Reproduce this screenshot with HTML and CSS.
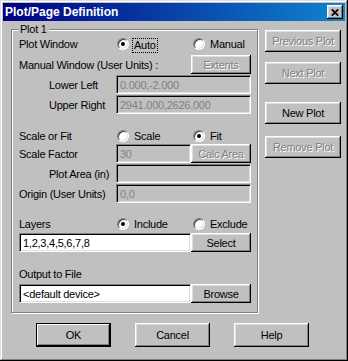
FILE: index.html
```html
<!DOCTYPE html>
<html>
<head>
<meta charset="utf-8">
<link rel="stylesheet" href="styles.css">
</head>
<body>
<div class="window">
  <div class="titlebar">
    <span class="title">Plot/Page Definition</span>
    <button class="close" type="button"><svg width="8" height="7" viewBox="0 0 8 7"><path d="M0.8 0.3 L7.2 6.7 M7.2 0.3 L0.8 6.7" stroke="#000" stroke-width="1.7" fill="none"/></svg></button>
  </div>
  <div class="main">
    <div class="group">
      <span class="legend">Plot 1</span>
      <div class="row h16">
        <span class="label">Plot Window</span>
        <span class="opt first"><span class="radio on"></span><span class="focus">Auto</span></span>
        <span class="opt"><span class="radio"></span><span class="optlabel">Manual</span></span>
      </div>
      <div class="row h19 mt3">
        <span class="label grow">Manual Window (User Units) :</span>
        <button class="btn w60 dis" type="button">Extents</button>
      </div>
      <div class="row h19 mt1">
        <span class="label ind">Lower Left</span>
        <span class="field w135">0.000,-2.000</span>
      </div>
      <div class="row h19 mt1">
        <span class="label ind">Upper Right</span>
        <span class="field w135">2941.000,2626.000</span>
      </div>
      <div class="row h16 mt14">
        <span class="label">Scale or Fit</span>
        <span class="opt first"><span class="radio"></span><span class="optlabel">Scale</span></span>
        <span class="opt"><span class="radio on"></span><span class="optlabel">Fit</span></span>
      </div>
      <div class="row h19">
        <span class="label">Scale Factor</span>
        <span class="field w75">30</span>
        <button class="btn w60 dis" type="button">Calc Area</button>
      </div>
      <div class="row h19 mt1">
        <span class="label ind">Plot Area (in)</span>
        <span class="field w135"></span>
      </div>
      <div class="row h19 mt1">
        <span class="label">Origin (User Units)</span>
        <span class="field w135">0,0</span>
      </div>
      <div class="row h16 mt13">
        <span class="label">Layers</span>
        <span class="opt first"><span class="radio on"></span><span class="optlabel">Include</span></span>
        <span class="opt"><span class="radio"></span><span class="optlabel">Exclude</span></span>
      </div>
      <div class="row h19 mt1">
        <span class="field w172 white">1,2,3,4,5,6,7,8</span>
        <button class="btn w60" type="button">Select</button>
      </div>
      <div class="row h16 mt14">
        <span class="label">Output to File</span>
      </div>
      <div class="row h19 mt2">
        <span class="field w172 white">&lt;default device&gt;</span>
        <button class="btn w60" type="button">Browse</button>
      </div>
    </div>
    <div class="side">
      <button class="btn side-btn dis" type="button">Previous Plot</button>
      <button class="btn side-btn dis next" type="button">Next Plot</button>
      <button class="btn side-btn new" type="button">New Plot</button>
      <button class="btn side-btn dis remove" type="button">Remove Plot</button>
    </div>
  </div>
  <div class="footer">
    <button class="btn foot default" type="button">OK</button>
    <button class="btn foot" type="button">Cancel</button>
    <button class="btn foot" type="button">Help</button>
  </div>
</div>
</body>
</html>
```
FILE: styles.css
```css
html, body {
  margin: 0;
  padding: 0;
  background: #c0c0c0;
}
body {
  font-family: "Liberation Sans", Arial, sans-serif;
  font-size: 11px;
  letter-spacing: -0.25px;
  color: #000;
}
.window {
  box-sizing: border-box;
  width: 348px;
  height: 361px;
  background: #c0c0c0;
  padding: 3px;
  box-shadow: inset -1px -1px #000, inset 1px 1px #dfdfdf, inset -2px -2px #808080, inset 2px 2px #fff;
}
.titlebar {
  height: 18px;
  background: linear-gradient(to right, #000080, #1084d0);
  display: flex;
  align-items: center;
  justify-content: space-between;
  padding: 0 2px;
}
.title {
  color: #fff;
  font-weight: bold;
  font-size: 12px;
  letter-spacing: 0;
  white-space: nowrap;
}
.close {
  box-sizing: border-box;
  width: 16px;
  height: 14px;
  border: 0;
  padding: 0;
  background: #c0c0c0;
  box-shadow: inset -1px -1px #000, inset 1px 1px #fff, inset -2px -2px #808080, inset 2px 2px #dfdfdf;
  display: flex;
  align-items: center;
  justify-content: center;
}
.main {
  display: flex;
  gap: 7px;
  padding: 8px 0 0 8px;
}
.group {
  position: relative;
  box-sizing: border-box;
  width: 247px;
  height: 284px;
  border: 1px solid #808080;
  box-shadow: inset 1px 1px #fff, 1px 1px #fff;
  padding: 6px 6px 0 7px;
  display: flex;
  flex-direction: column;
  flex: none;
}
.legend {
  position: absolute;
  left: 6px;
  top: -7px;
  padding: 0 2px;
  height: 13px;
  line-height: 13px;
  background: #c0c0c0;
}
.row {
  display: flex;
  align-items: center;
  flex: none;
}
.h16 { height: 16px; }
.h19 { height: 19px; }
.mt1 { margin-top: 1px; }
.mt2 { margin-top: 2px; }
.mt3 { margin-top: 3px; }
.mt13 { margin-top: 13px; }
.mt14 { margin-top: 14px; }
.label {
  width: 97px;
  flex: none;
  white-space: nowrap;
  box-sizing: border-box;
}
.label.ind { padding-left: 30px; }
.label.grow { flex: 1; width: auto; }
.opt {
  display: flex;
  align-items: center;
  width: 76px;
  flex: none;
}
.opt.first { margin-left: 1px; }
.radio {
  box-sizing: border-box;
  position: relative;
  width: 12px;
  height: 12px;
  flex: none;
  border-radius: 50%;
  background: #fff;
  border: 1px solid;
  border-color: #808080 #fff #fff #808080;
  box-shadow: inset 1px 1px #404040, inset -1px -1px #dfdfdf;
}
.radio.on::after {
  content: "";
  position: absolute;
  left: 3px;
  top: 3px;
  width: 4px;
  height: 4px;
  border-radius: 50%;
  background: #000;
}
.optlabel { margin-left: 5px; white-space: nowrap; }
.focus {
  margin-left: 3px;
  margin-top: 3px;
  padding: 0 1px;
  border: 1px dotted #000;
  line-height: 13px;
  white-space: nowrap;
}
.field {
  box-sizing: border-box;
  height: 19px;
  flex: none;
  border: 1px solid;
  border-color: #808080 #fff #fff #808080;
  box-shadow: inset 1px 1px #000, inset -1px -1px #dfdfdf;
  padding-left: 3px;
  display: flex;
  align-items: center;
  color: #808080;
  white-space: nowrap;
  overflow: hidden;
  background: #c0c0c0;
}
.field.white { background: #fff; color: #000; }
.w135 { width: 135px; }
.w75 { width: 75px; }
.w172 { width: 172px; }
.btn {
  box-sizing: border-box;
  border: 0;
  padding: 0;
  margin: 0;
  background: #c0c0c0;
  font: inherit;
  letter-spacing: inherit;
  color: #000;
  box-shadow: inset -1px -1px #000, inset 1px 1px #fff, inset -2px -2px #808080, inset 2px 2px #dfdfdf;
  display: flex;
  align-items: center;
  justify-content: center;
  white-space: nowrap;
  flex: none;
}
.btn.dis { color: #808080; text-shadow: 1px 1px 0 #fff; }
.w60 { width: 60px; height: 19px; }
.side {
  display: flex;
  flex-direction: column;
  margin-top: 1px;
}
.side-btn { width: 76px; height: 22px; }
.side-btn.next { margin-top: 10px; }
.side-btn.new { margin-top: 18px; }
.side-btn.remove { margin-top: 12px; }
.footer {
  display: flex;
  gap: 24px;
  margin-top: 10px;
  padding-left: 33px;
}
.foot { width: 75px; height: 24px; }
.foot.default {
  box-shadow: inset 0 0 0 1px #000, inset -2px -2px #000, inset 2px 2px #fff, inset -3px -3px #808080;
}
```
